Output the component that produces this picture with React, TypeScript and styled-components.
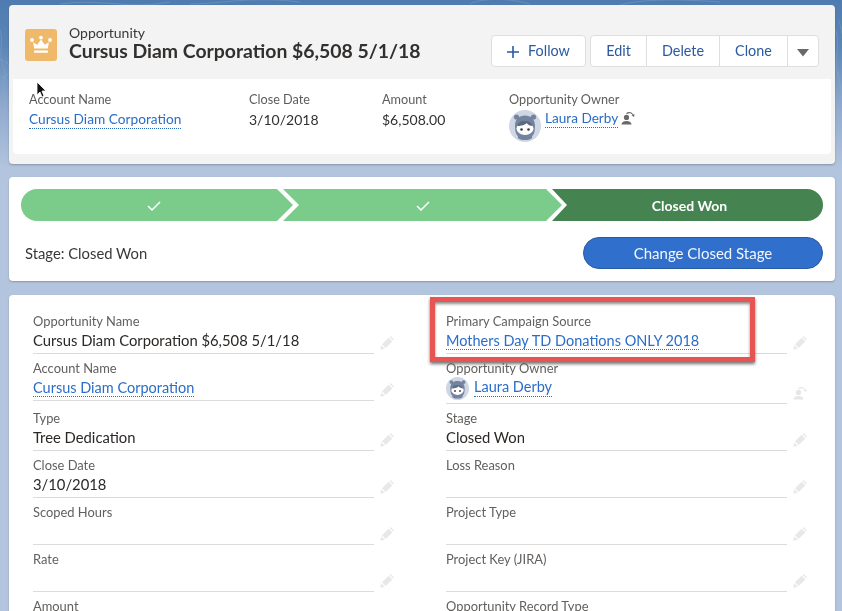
import React from "react";
import styled, { createGlobalStyle } from "styled-components";

const Global = createGlobalStyle`
  html, body { margin: 0; padding: 0; }
  body { width: 842px; height: 611px; overflow: hidden; background: #b3c5de; }
  #root { width: 842px; height: 611px; }
`;

const Page = styled.div`
  position: relative;
  width: 842px;
  height: 611px;
  overflow: hidden;
  box-sizing: border-box;
  padding: 5px 7px 0 9px;
  display: flex;
  flex-direction: column;
  gap: 13px;
  font-family: Lato, "Noto Sans", sans-serif;
  color: #32302e;
  background: linear-gradient(#4f7cb0 0, #5a85b6 45px, #8fa9cd 105px, #b3c5de 170px);
  filter: blur(0.3px);
`;
const Contours = styled.svg`
  position: absolute;
  left: 0;
  top: 0;
  pointer-events: none;
`;
const Card = styled.section<{ $tone?: string }>`
  position: relative;
  flex: none;
  background: ${(p) => p.$tone || "#fff"};
  border-radius: 4px;
  box-shadow: 0 1px 2px rgba(60, 60, 60, 0.35);
`;
const HeaderCard = styled(Card)`
  height: 159px;
  padding: 0 4px;
  box-sizing: border-box;
`;
const Header = styled.header`
  height: 74px;
  display: flex;
  align-items: flex-start;
`;
const RecordIcon = styled.div`
  width: 32px;
  height: 32px;
  margin: 24px 12px 0 12px;
  background: #f0b869;
  border-radius: 3px;
  display: flex;
  align-items: center;
  justify-content: center;
`;
const Titles = styled.div`
  flex: 1;
  padding-top: 20px;
`;
const Kind = styled.div`
  font-size: 14px;
  line-height: 16px;
  color: #3a3836;
`;
const Title = styled.h1`
  margin: 0;
  font-size: 19.4px;
  line-height: 20px;
  font-weight: 700;
  color: #32302e;
  white-space: nowrap;
`;
const Actions = styled.div`
  display: flex;
  gap: 4px;
  margin: 30px 12px 0 0;
`;
const ButtonGroup = styled.div`
  display: flex;
  height: 32px;
  background: #fff;
  border: 1px solid #dedede;
  border-radius: 4px;
  box-sizing: border-box;
`;
const ActionButton = styled.div<{ $w: number }>`
  width: ${(p) => p.$w}px;
  display: flex;
  align-items: center;
  justify-content: center;
  gap: 9px;
  padding-bottom: 1px;
  font-size: 14.4px;
  color: #2b5a9e;
  box-sizing: border-box;
  & + & {
    border-left: 1px solid #dedede;
  }
`;
const Highlights = styled.div`
  height: 75px;
  background: #fff;
  border-radius: 0 0 4px 4px;
  display: flex;
  padding: 11px 0 0 16px;
  box-sizing: border-box;
`;
const HighlightCol = styled.div<{ $w?: number }>`
  width: ${(p) => (p.$w ? `${p.$w}px` : "auto")};
`;
const HighlightLabel = styled.div`
  font-size: 12.7px;
  line-height: 18px;
  color: #5f5d5b;
`;
const HighlightValue = styled.div`
  margin-top: 2px;
  font-size: 14px;
  line-height: 20px;
  color: #32302e;
  display: flex;
  align-items: flex-start;
`;
const RecordLink = styled.span<{ $size?: number }>`
  color: #2a6dc9;
  font-size: ${(p) => p.$size || 14.5}px;
  line-height: 18px;
  border-bottom: 1px dotted #2a6dc9;
  white-space: nowrap;
`;
const OwnerRow = styled.div`
  display: flex;
  align-items: flex-start;
  gap: 4px;
  margin-top: 1px;
`;
const HighlightAvatar = styled.div`
  display: flex;
  margin-top: 1px;
`;
const HighlightOwnerIcon = styled.div`
  display: flex;
  margin: 2px 0 0 -1px;
`;
const PathCard = styled(Card)`
  height: 104px;
  padding: 12px 12px 0;
  box-sizing: border-box;
`;
const Path = styled.div`
  display: flex;
  height: 32px;
`;
const Stage = styled.div<{ $kind: "first" | "mid" | "last" }>`
  flex: none;
  height: 32px;
  display: flex;
  align-items: center;
  justify-content: center;
  color: #fff;
  font-size: 14px;
  font-weight: 700;
  box-sizing: border-box;
  background: ${(p) => (p.$kind === "last" ? "#458450" : "#7bcb8a")};
  width: ${(p) => (p.$kind === "first" ? 272 : p.$kind === "mid" ? 279 : 271)}px;
  margin-left: ${(p) => (p.$kind === "first" ? 0 : -10)}px;
  padding: ${(p) => (p.$kind === "first" ? "0 6px 0 0" : p.$kind === "last" ? "0 0 0 4px" : "0")};
  border-radius: ${(p) =>
    p.$kind === "first" ? "16px 0 0 16px" : p.$kind === "last" ? "0 16px 16px 0" : "0"};
  clip-path: ${(p) =>
    p.$kind === "first"
      ? "polygon(0 0, calc(100% - 16px) 0, 100% 50%, calc(100% - 16px) 100%, 0 100%)"
      : p.$kind === "mid"
      ? "polygon(0 0, calc(100% - 16px) 0, 100% 50%, calc(100% - 16px) 100%, 0 100%, 16px 50%)"
      : "polygon(0 0, 100% 0, 100% 100%, 0 100%, 15px 50%)"};
`;
const StageFooter = styled.div`
  display: flex;
  align-items: center;
  justify-content: space-between;
  margin-top: 16px;
  padding-left: 4px;
`;
const StageText = styled.div`
  font-size: 14.8px;
  color: #3a3836;
`;
const PrimaryButton = styled.div`
  width: 240px;
  height: 32px;
  border-radius: 16px;
  background: #3070cc;
  border: 1px solid #2a5b9f;
  box-sizing: border-box;
  color: #f2f6fc;
  font-size: 15px;
  display: flex;
  align-items: center;
  justify-content: center;
`;
const DetailCard = styled(Card)`
  flex: none;
  margin-top: 1px;
  padding: 12px 0 0 24px;
  display: grid;
  grid-template-columns: 413px 413px;
  grid-auto-rows: min-content;
  align-items: start;
  border-radius: 4px 4px 0 0;
`;
const FieldRow = styled.div`
  position: relative;
  display: flex;
  align-items: flex-end;
`;
const Field = styled.div<{ $tall?: boolean }>`
  width: 341px;
  height: ${(p) => (p.$tall ? 50 : 47)}px;
  box-sizing: border-box;
  padding-top: 5px;
  border-bottom: 1px solid #dddbda;
`;
const FieldLabel = styled.div`
  font-size: 12.9px;
  line-height: 18px;
  color: #625f5d;
  white-space: nowrap;
`;
const FieldValue = styled.div`
  font-size: 14.8px;
  line-height: 20px;
  color: #2b2826;
  white-space: nowrap;
`;
const OwnerValue = styled.div`
  display: flex;
  align-items: flex-start;
  gap: 5px;
`;
const OwnerLink = styled(RecordLink)`
  margin-top: 1px;
`;
const EditSlot = styled.div`
  margin: 0 0 4px 6px;
  width: 14px;
  height: 14px;
  display: flex;
`;
const Callout = styled.div`
  position: absolute;
  left: -16px;
  top: -10px;
  width: 325px;
  height: 65px;
  box-sizing: border-box;
  border: 5px solid #e65552;
  box-shadow: 0 2px 3px rgba(0, 0, 0, 0.55), inset 0 2px 3px rgba(0, 0, 0, 0.45);
`;
const Pointer = styled.svg`
  position: absolute;
  left: 36px;
  top: 81px;
`;

const Crown = () => (
  <svg width="22" height="20" viewBox="0 0 22 20" fill="#fff">
    <circle cx="11" cy="2.6" r="1.9" />
    <circle cx="2" cy="5" r="1.9" />
    <circle cx="20" cy="5" r="1.9" />
    <path d="M3 7.2l4.2 2.6L11 4.6l3.8 5.2L19 7.2l-1.3 6.3H4.3z" />
    <rect x="4" y="15.4" width="14" height="2.3" rx=".6" />
  </svg>
);
const Plus = () => (
  <svg width="12" height="12" viewBox="0 0 12 12" stroke="#2b5a9e" strokeWidth="1.6" style={{ marginTop: 3 }}>
    <path d="M6 0v12M0 6h12" />
  </svg>
);
const Caret = () => (
  <svg width="12" height="8" viewBox="0 0 12 8" fill="#6b6967" style={{ marginTop: 5 }}>
    <path d="M0 0h12L6 7.5z" />
  </svg>
);
const Tick = () => (
  <svg width="14" height="11" viewBox="0 0 14 11" fill="none" stroke="#fff" strokeWidth="1.5" style={{ marginTop: 2 }}>
    <path d="M1 5l4 4 8-8" />
  </svg>
);
const Pencil = () => (
  <svg width="14" height="14" viewBox="0 0 14 14" fill="#e8e8e8">
    <path d="M0.3 13.7l1-4.4 3.4 3.4z" />
    <path d="M2 8.3l6.6-6.6 3.7 3.7-6.6 6.6z" />
    <path d="M9.5.9l.5-.5c.3-.3.7-.3 1 0l2.6 2.6c.3.3.3.7 0 1l-.5.5z" />
  </svg>
);
const ChangeOwner = ({ color }: { color: string }) => (
  <svg width="14" height="14" viewBox="0 0 14 14" fill={color}>
    <circle cx="5.5" cy="6.4" r="2.6" />
    <path d="M0.5 13.5c0-2.4 2-3.6 5-3.6s5 1.2 5 3.6z" />
    <path d="M5 2.2C7 .2 10.6.6 12.3 3.4l1.2-.5-.4 3-2.5-1.4 1-.5C10.4 2.2 8 1.8 6 3.1z" />
  </svg>
);
const Avatar = ({ size }: { size: number }) => (
  <svg width={size} height={size} viewBox="0 0 32 32" style={{ flex: "none" }}>
    <circle cx="16" cy="16" r="16" fill="#cfd7e5" />
    <circle cx="7.5" cy="7" r="2.6" fill="#74849f" />
    <circle cx="24.5" cy="7" r="2.6" fill="#74849f" />
    <path d="M6 16C6 9 10 5.5 16 5.5S26 9 26 16c0 5-1 9-3 10 1 2-1 4-7 4s-8-2-7-4c-2-1-3-5-3-10z" fill="#74849f" />
    <ellipse cx="16" cy="18.5" rx="8.5" ry="6.5" fill="#fff" />
    <path d="M8 16c2-4 4-5 8-5s6 1 8 5c-3 0-5-1-6.5-3-1 2-5 3-9.5 3z" fill="#5a6a84" />
    <circle cx="12.5" cy="19.5" r="1.3" fill="#2f3b4b" />
    <circle cx="19.5" cy="19.5" r="1.3" fill="#2f3b4b" />
  </svg>
);

const left: [string, string?, string?][] = [
  ["Opportunity Name", "Cursus Diam Corporation $6,508 5/1/18"],
  ["Account Name", undefined, "Cursus Diam Corporation"],
  ["Type", "Tree Dedication"],
  ["Close Date", "3/10/2018"],
  ["Scoped Hours"],
  ["Rate"],
  ["Amount"],
];
const right: [string, string?, string?][] = [
  ["Primary Campaign Source", undefined, "Mothers Day TD Donations ONLY 2018"],
  ["Opportunity Owner"],
  ["Stage", "Closed Won"],
  ["Loss Reason"],
  ["Project Type"],
  ["Project Key (JIRA)"],
  ["Opportunity Record Type"],
];

export default function App() {
  return (
    <Page>
      <Global />
      <Contours width="842" height="110" viewBox="0 0 842 110" fill="none" stroke="#8fadd0" strokeOpacity=".35">
        <path d="M0 30c4 10-2 24 3 36s-3 20 2 34" />
        <path d="M0 60a6 6 0 1 1 1 18" />
        <path d="M60 4c40-6 70 6 110-2M190 4c30 0 60-8 110-2M470 4c10-6 40-6 60 0M620 5c20-6 60-6 100-3" />
        <path d="M836 30c4 16-2 30 2 46M838 20c3 4 3 10 4 14M838 70l4 30" />
      </Contours>
      <HeaderCard $tone="#f3f3f3">
        <Header>
          <RecordIcon>
            <Crown />
          </RecordIcon>
          <Titles>
            <Kind>Opportunity</Kind>
            <Title>Cursus Diam Corporation $6,508 5/1/18</Title>
          </Titles>
          <Actions>
            <ButtonGroup>
              <ActionButton $w={93}>
                <Plus />
                Follow
              </ActionButton>
            </ButtonGroup>
            <ButtonGroup>
              <ActionButton $w={55}>Edit</ActionButton>
              <ActionButton $w={73}>Delete</ActionButton>
              <ActionButton $w={68}>Clone</ActionButton>
              <ActionButton $w={31}>
                <Caret />
              </ActionButton>
            </ButtonGroup>
          </Actions>
        </Header>
        <Highlights>
          <HighlightCol $w={220}>
            <HighlightLabel>Account Name</HighlightLabel>
            <HighlightValue>
              <RecordLink $size={13.7}>Cursus Diam Corporation</RecordLink>
            </HighlightValue>
          </HighlightCol>
          <HighlightCol $w={133}>
            <HighlightLabel>Close Date</HighlightLabel>
            <HighlightValue>3/10/2018</HighlightValue>
          </HighlightCol>
          <HighlightCol $w={127}>
            <HighlightLabel>Amount</HighlightLabel>
            <HighlightValue>$6,508.00</HighlightValue>
          </HighlightCol>
          <HighlightCol>
            <HighlightLabel>Opportunity Owner</HighlightLabel>
            <OwnerRow>
              <HighlightAvatar>
                <Avatar size={32} />
              </HighlightAvatar>
              <RecordLink $size={13.6}>Laura Derby</RecordLink>
              <HighlightOwnerIcon>
                <ChangeOwner color="#6b6967" />
              </HighlightOwnerIcon>
            </OwnerRow>
          </HighlightCol>
        </Highlights>
      </HeaderCard>
      <PathCard>
        <Path>
          <Stage $kind="first">
            <Tick />
          </Stage>
          <Stage $kind="mid">
            <Tick />
          </Stage>
          <Stage $kind="last">Closed Won</Stage>
        </Path>
        <StageFooter>
          <StageText>Stage: Closed Won</StageText>
          <PrimaryButton>Change Closed Stage</PrimaryButton>
        </StageFooter>
      </PathCard>
      <DetailCard>
        {left.map((l, i) => {
          const r = right[i];
          const isOwner = r[0] === "Opportunity Owner";
          return (
            <React.Fragment key={l[0]}>
              <FieldRow>
                <Field>
                  <FieldLabel>{l[0]}</FieldLabel>
                  <FieldValue>{l[2] ? <RecordLink>{l[2]}</RecordLink> : l[1] || "\u00a0"}</FieldValue>
                </Field>
                <EditSlot>
                  <Pencil />
                </EditSlot>
              </FieldRow>
              <FieldRow>
                <Field $tall={isOwner}>
                  <FieldLabel>{r[0]}</FieldLabel>
                  {isOwner ? (
                    <OwnerValue>
                      <Avatar size={23} />
                      <OwnerLink>Laura Derby</OwnerLink>
                    </OwnerValue>
                  ) : (
                    <FieldValue>{r[2] ? <RecordLink>{r[2]}</RecordLink> : r[1] || "\u00a0"}</FieldValue>
                  )}
                </Field>
                <EditSlot>{isOwner ? <ChangeOwner color="#e6e6e6" /> : <Pencil />}</EditSlot>
                {i === 0 && <Callout />}
              </FieldRow>
            </React.Fragment>
          );
        })}
      </DetailCard>
      <Pointer width="12" height="18" viewBox="0 0 12 18">
        <path d="M1 1v13l3-3 2 5 2-1-2-5h4z" fill="#111" stroke="#fff" strokeWidth=".8" />
      </Pointer>
    </Page>
  );
}
